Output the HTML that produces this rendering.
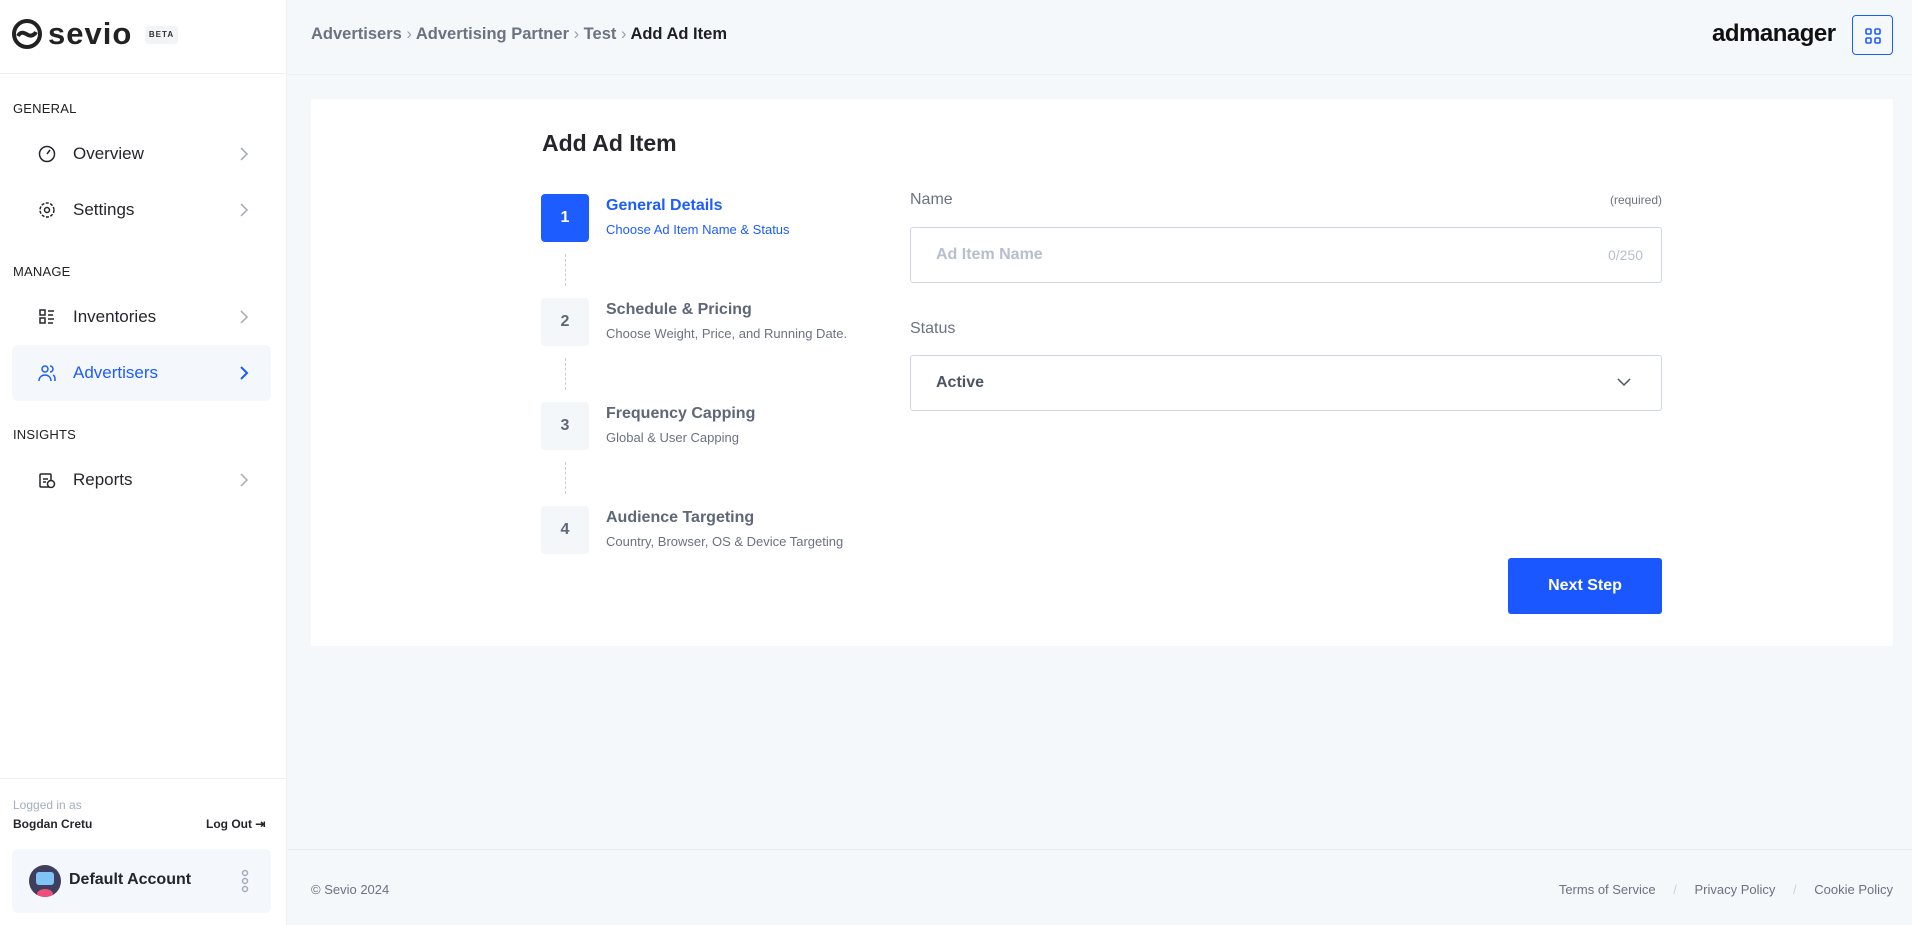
<!DOCTYPE html>
<html><head><meta charset="utf-8"><style>
*{box-sizing:border-box;margin:0;padding:0}
body{width:1912px;height:925px;font-family:"Liberation Sans",sans-serif;background:#f5f8fb;position:relative;overflow:hidden;color:#1e1e24}
.a{position:absolute}
#side{left:0;top:0;width:287px;height:925px;background:#fff;border-right:1px solid #eef0f3}
.sec{left:13px;font-size:13px;color:#222;letter-spacing:.2px}
.it{left:12px;width:259px;height:56px;border-radius:6px}
.it .ic{position:absolute;left:26px;top:19px;width:18px;height:18px}
.it .lb{position:absolute;left:61px;top:18px;font-size:17px;color:#25262b}
.it .ch{position:absolute;left:227px;top:20px}
.step{left:541px;width:48px;height:48px;border-radius:4px;background:#f4f7fa;color:#5d6778;font-weight:bold;font-size:16px;text-align:center;line-height:48px}
.st{left:606px;font-size:16px;font-weight:bold;color:#5d6778}
.ss{left:606px;font-size:13px;color:#6b7280}
.dash{left:565px;width:0;height:32px;border-left:1px dashed #c8d0dc}
.box{left:910px;width:752px;height:56px;border:1px solid #cfd6e1;border-radius:3px;background:#fff}
</style></head><body>
<div id="side" class="a">
  <div class="a" style="left:0;top:73px;width:287px;border-top:1px solid #eef0f3"></div>
  <svg class="a" style="left:12px;top:19px" width="30" height="30" viewBox="0 0 30 30"><circle cx="15" cy="15" r="13" fill="none" stroke="#222" stroke-width="4"/><path d="M6 17c3-6 8-2 10-1s6 1 8-3" stroke="#222" stroke-width="4" fill="none"/></svg>
  <div class="a" style="left:48px;top:16px;font-size:31px;font-weight:bold;color:#222;letter-spacing:1px">sevio</div>
  <div class="a" style="left:145px;top:26px;width:33px;height:18px;background:#f3f4f6;border-radius:3px;font-size:8px;font-weight:bold;text-align:center;line-height:18px;letter-spacing:1px;color:#333">BETA</div>
  <div class="a sec" style="top:101px">GENERAL</div>
  <div class="a it" style="top:126px"><svg class="ic" viewBox="0 0 18 18"><circle cx="9" cy="9" r="7.5" fill="none" stroke="#25262b" stroke-width="1.5"/><path d="M9 9l3-4" stroke="#25262b" stroke-width="1.5"/></svg><span class="lb">Overview</span><svg class="ch" width="10" height="16"><path d="M2 2l6 6-6 6" stroke="#a3a9b3" stroke-width="1.5" fill="none"/></svg></div>
  <div class="a it" style="top:182px"><svg class="ic" viewBox="0 0 18 18"><circle cx="9" cy="9" r="7" fill="none" stroke="#25262b" stroke-width="1.5" stroke-dasharray="3 1.5"/><circle cx="9" cy="9" r="2.5" fill="none" stroke="#25262b" stroke-width="1.5"/></svg><span class="lb">Settings</span><svg class="ch" width="10" height="16"><path d="M2 2l6 6-6 6" stroke="#a3a9b3" stroke-width="1.5" fill="none"/></svg></div>
  <div class="a sec" style="top:264px">MANAGE</div>
  <div class="a it" style="top:289px"><svg class="ic" viewBox="0 0 18 18"><rect x="2" y="2" width="5" height="5" fill="none" stroke="#25262b" stroke-width="1.5"/><rect x="2" y="10" width="5" height="5" fill="none" stroke="#25262b" stroke-width="1.5"/><path d="M10 3h6M10 7h5M10 11h6M10 15h5" stroke="#25262b" stroke-width="1.5"/></svg><span class="lb">Inventories</span><svg class="ch" width="10" height="16"><path d="M2 2l6 6-6 6" stroke="#a3a9b3" stroke-width="1.5" fill="none"/></svg></div>
  <div class="a it" style="top:345px;background:#f4f7fb"><svg class="ic" viewBox="0 0 18 18"><circle cx="7" cy="5" r="3" fill="none" stroke="#1d5cff" stroke-width="1.5"/><path d="M1 17c0-4 3-6 6-6s6 2 6 6M12 2a3 3 0 010 6M15 11c2 1 2 3 2 6" stroke="#1d5cff" stroke-width="1.5" fill="none"/></svg><span class="lb" style="color:#1d5cff">Advertisers</span><svg class="ch" width="10" height="16"><path d="M2 2l6 6-6 6" stroke="#1d5cff" stroke-width="2" fill="none"/></svg></div>
  <div class="a sec" style="top:427px">INSIGHTS</div>
  <div class="a it" style="top:452px"><svg class="ic" viewBox="0 0 18 18"><rect x="2" y="3" width="11" height="13" rx="1" fill="none" stroke="#25262b" stroke-width="1.5"/><path d="M5 8h5M5 11h3" stroke="#25262b" stroke-width="1.5"/><circle cx="13" cy="13" r="3.5" fill="#fff" stroke="#25262b" stroke-width="1.5"/></svg><span class="lb">Reports</span><svg class="ch" width="10" height="16"><path d="M2 2l6 6-6 6" stroke="#a3a9b3" stroke-width="1.5" fill="none"/></svg></div>
  <div class="a" style="left:0;top:778px;width:287px;border-top:1px solid #eef0f3"></div>
  <div class="a" style="left:13px;top:798px;font-size:12px;color:#a3adc0">Logged in as</div>
  <div class="a" style="left:13px;top:817px;font-size:12px;font-weight:bold;color:#25262b">Bogdan Cretu</div>
  <div class="a" style="left:206px;top:817px;font-size:12px;font-weight:bold;color:#25262b">Log Out ⇥</div>
  <div class="a" style="left:12px;top:849px;width:259px;height:64px;background:#f4f7fb;border-radius:6px">
    <div class="a" style="left:17px;top:16px;width:32px;height:32px;border-radius:50%;background:#3e3f5e;overflow:hidden"><div class="a" style="left:7px;top:7px;width:18px;height:13px;background:#7fc4f5;border-radius:3px"></div><div class="a" style="left:8px;top:24px;width:16px;height:10px;background:#ef4d7b;border-radius:50%"></div></div>
    <div class="a" style="left:57px;top:22px;font-size:16px;font-weight:bold;color:#25262b">Default Account</div>
    <svg class="a" style="left:229px;top:20px" width="8" height="24"><circle cx="4" cy="4" r="2.5" fill="none" stroke="#a3adc0" stroke-width="1.5"/><circle cx="4" cy="12" r="2.5" fill="none" stroke="#a3adc0" stroke-width="1.5"/><circle cx="4" cy="20" r="2.5" fill="none" stroke="#a3adc0" stroke-width="1.5"/></svg>
  </div>
</div>
<div class="a" style="left:288px;top:74px;width:1624px;border-top:1px solid #eceff3"></div>
<div class="a" style="left:311px;top:25px;font-size:16.5px;font-weight:bold;color:#6b7280">Advertisers <span style="font-weight:normal;color:#9aa1ad">›</span> Advertising Partner <span style="font-weight:normal;color:#9aa1ad">›</span> Test <span style="font-weight:normal;color:#9aa1ad">›</span> <span style="color:#1e1e24">Add Ad Item</span></div>
<div class="a" style="left:1712px;top:20px;font-size:24px;font-weight:bold;color:#111;letter-spacing:-.5px">admanager</div>
<div class="a" style="left:1852px;top:15px;width:41px;height:40px;border:1.5px solid #1d5cff;border-radius:4px"><svg class="a" style="left:12px;top:12px" width="16" height="16"><rect x="1" y="1" width="5" height="5" rx="1.2" fill="none" stroke="#1d5cff" stroke-width="1.6"/><rect x="10" y="1" width="5" height="5" rx="1.2" fill="none" stroke="#1d5cff" stroke-width="1.6"/><rect x="1" y="10" width="5" height="5" rx="1.2" fill="none" stroke="#1d5cff" stroke-width="1.6"/><rect x="10" y="10" width="5" height="5" rx="1.2" fill="none" stroke="#1d5cff" stroke-width="1.6"/></svg></div>
<div class="a" style="left:311px;top:99px;width:1582px;height:547px;background:#fff"></div>
<div class="a" style="left:542px;top:130px;font-size:23px;font-weight:bold;color:#25262b">Add Ad Item</div>
<div class="a step" style="top:194px;background:#1d5cff;color:#fff">1</div>
<div class="a st" style="top:197px;color:#1d5cff">General Details</div>
<div class="a ss" style="top:222px;color:#1d5cff">Choose Ad Item Name &amp; Status</div>
<div class="a dash" style="top:254px"></div>
<div class="a step" style="top:298px">2</div>
<div class="a st" style="top:301px">Schedule &amp; Pricing</div>
<div class="a ss" style="top:326px">Choose Weight, Price, and Running Date.</div>
<div class="a dash" style="top:358px"></div>
<div class="a step" style="top:402px">3</div>
<div class="a st" style="top:405px">Frequency Capping</div>
<div class="a ss" style="top:430px">Global &amp; User Capping</div>
<div class="a dash" style="top:462px"></div>
<div class="a step" style="top:506px">4</div>
<div class="a st" style="top:509px">Audience Targeting</div>
<div class="a ss" style="top:534px">Country, Browser, OS &amp; Device Targeting</div>
<div class="a" style="left:910px;top:191px;font-size:16px;color:#6b7280">Name</div>
<div class="a" style="left:1600px;top:193px;width:62px;text-align:right;font-size:12px;color:#6b7280">(required)</div>
<div class="a box" style="top:227px"><span class="a" style="left:25px;top:18px;font-size:16px;font-weight:bold;color:#b6bfcd">Ad Item Name</span><span class="a" style="right:18px;top:19px;font-size:14px;color:#b6bfcd">0/250</span></div>
<div class="a" style="left:910px;top:320px;font-size:16px;color:#6b7280">Status</div>
<div class="a box" style="top:355px"><span class="a" style="left:25px;top:18px;font-size:16px;font-weight:bold;color:#4b5563">Active</span><svg class="a" style="left:706px;top:22px" width="14" height="10"><path d="M1 1l6 6 6-6" stroke="#4b5563" stroke-width="1.5" fill="none"/></svg></div>
<div class="a" style="left:1508px;top:558px;width:154px;height:56px;background:#1a57ff;border-radius:3px;color:#fff;font-size:16px;font-weight:bold;text-align:center;line-height:56px">Next Step</div>
<div class="a" style="left:288px;top:849px;width:1624px;border-top:1px solid #e8ebef"></div>
<div class="a" style="left:311px;top:882px;font-size:13px;color:#6b7280">© Sevio 2024</div>
<div class="a" style="right:19px;top:882px;font-size:13px;color:#6b7280;word-spacing:0">Terms of Service <span style="color:#ccd2db;margin:0 14px">/</span> Privacy Policy <span style="color:#ccd2db;margin:0 14px">/</span> Cookie Policy</div>
</body></html>
